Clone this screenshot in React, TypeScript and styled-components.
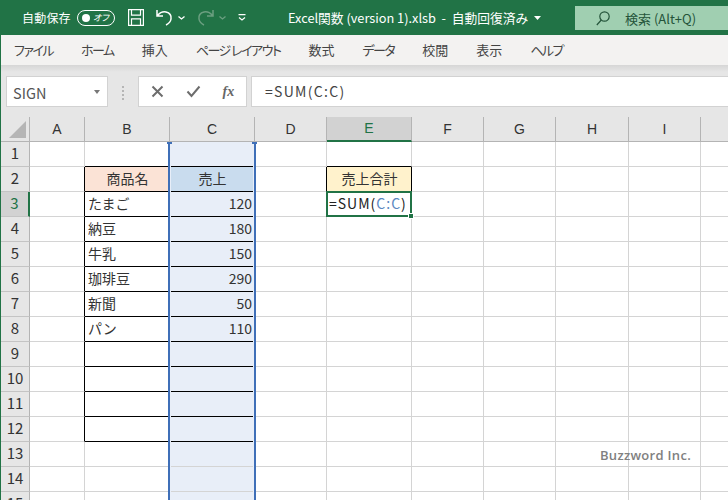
import React from "react";
import styled, { createGlobalStyle } from "styled-components";

const GlobalStyle = createGlobalStyle`
  html, body {
    margin: 0;
    padding: 0;
    background: #fff;
  }
  body {
    font-family: "Noto Sans CJK JP", "Noto Sans", sans-serif;
  }
`;

const Page = styled.div`
  position: relative;
  width: 727px;
  height: 500px;
  overflow: hidden;
  border-left: 1px solid #217346;
  display: flex;
  flex-direction: column;
`;

const TitleBar = styled.header`
  height: 35px;
  flex: none;
  background: #217346;
  color: #fff;
  display: flex;
  align-items: center;
  font-size: 12px;
  font-feature-settings: "palt";
  padding-left: 21px;
`;

const AutoSave = styled.span`
  width: 55px;
  letter-spacing: 0.2px;
`;

const Toggle = styled.span`
  box-sizing: border-box;
  width: 38px;
  height: 16px;
  border: 1px solid #fff;
  border-radius: 8px;
  display: flex;
  align-items: center;
  padding-left: 4px;
  gap: 3px;
  font-size: 9px;
  font-style: italic;
  line-height: 1;
`;

const Knob = styled.i`
  width: 8px;
  height: 8px;
  border-radius: 50%;
  background: #fff;
`;

const BarIcon = styled.svg<{ $gap: number; $dim?: boolean }>`
  flex: none;
  margin-left: ${(p) => p.$gap}px;
  fill: none;
  stroke: ${(p) => (p.$dim ? "#6b9f80" : "#fff")};
`;

const DocTitle = styled.span`
  margin-left: 42px;
  width: 246px;
  white-space: pre;
  font-size: 12.750px;
`;

const SearchBox = styled.div`
  margin-left: 34px;
  flex: 1;
  height: 24px;
  align-self: flex-start;
  margin-top: 6px;
  background: #a0cfb1;
  color: #24543a;
  display: flex;
  align-items: center;
  padding-left: 21px;
  gap: 15px;
  font-size: 13px;
`;

const Menu = styled.nav`
  height: 30px;
  flex: none;
  background: #f3f2f1;
  display: flex;
  align-items: center;
  gap: 28px;
  padding-left: 13px;
  padding-bottom: 1px;
  box-sizing: border-box;
  color: #444;
  font-size: 13px;
  font-feature-settings: "palt";
`;

const MenuItem = styled.span<{ $kana: boolean }>`
  letter-spacing: ${(p) => (p.$kana ? "-1.500px" : "0")};
`;

const FormulaArea = styled.div`
  height: 52px;
  flex: none;
  box-sizing: border-box;
  padding: 11px 0 0 5px;
  background: linear-gradient(#d6d6d6, #e6e6e6 7px);
  display: flex;
  align-items: flex-start;
`;

const Field = styled.div`
  box-sizing: border-box;
  height: 31px;
  background: #fff;
  border: 1px solid #d2d2d2;
  display: flex;
  align-items: center;
  color: #555;
`;

const NameBox = styled(Field)`
  width: 102px;
  padding: 1px 7px 0 6px;
  justify-content: space-between;
  font-size: 14.500px;
`;

const Arrow = styled.i`
  width: 0;
  height: 0;
  border-left: 3.500px solid transparent;
  border-right: 3.500px solid transparent;
  border-top: 4px solid #777;
`;

const Grip = styled.span`
  width: 30px;
  display: flex;
  flex-direction: column;
  align-items: center;
  gap: 2px;
  padding-top: 10px;

  i {
    width: 2px;
    height: 2px;
    background: #b5b5b5;
  }
`;

const ButtonBox = styled(Field)`
  width: 109px;
  margin-right: 4px;
  padding-left: 11.500px;
  gap: 22px;
`;

const ButtonIcon = styled.svg`
  fill: none;
  stroke: #6d6d6d;
  stroke-width: 2;
  flex: none;
`;

const FxLabel = styled.span`
  font-family: "Liberation Serif", serif;
  font-style: italic;
  font-weight: 700;
  font-size: 14px;
  color: #666;
`;

const FormulaInput = styled(Field)`
  flex: 1;
  padding: 0 0 1px 13px;
  border-right: none;
  font-size: 14px;
  letter-spacing: 1.300px;
  color: #444;
`;

const Sheet = styled.div`
  flex: 1;
  display: grid;
  grid-template-columns: 29px 55px 85px 85px 72px 85px 72px 72px 73px 72px 28px;
  grid-auto-rows: 25px;
  grid-template-rows: 25px;
  overflow: hidden;
  color: #333;
  font-size: 14px;
`;

const Corner = styled.div`
  background: #e6e6e6;
  border-right: 1px solid #b4b4b4;
  border-bottom: 1px solid #b4b4b4;
  box-sizing: border-box;
  display: flex;
  align-items: flex-end;
  justify-content: flex-end;
  padding: 0 3px 3px 0;
`;

const CornerMark = styled.i`
  width: 0;
  height: 0;
  border-left: 17px solid transparent;
  border-bottom: 17px solid #b5b5b5;
`;

const ColHead = styled.div<{ $active?: boolean }>`
  box-sizing: border-box;
  display: flex;
  align-items: center;
  justify-content: center;
  padding-bottom: 1px;
  font-family: "Liberation Sans", sans-serif;
  background: ${(p) => (p.$active ? "#d2d2d2" : "#e6e6e6")};
  color: ${(p) => (p.$active ? "#217346" : "#333")};
  border-right: 1px solid #b4b4b4;
  border-bottom: ${(p) => (p.$active ? "2px solid #217346" : "1px solid #b4b4b4")};
`;

const RowHead = styled.div<{ $row: number; $active?: boolean }>`
  grid-column: 1;
  grid-row: ${(p) => p.$row + 1};
  box-sizing: border-box;
  display: flex;
  align-items: center;
  justify-content: center;
  padding-bottom: 3px;
  font-size: 15px;
  background: ${(p) => (p.$active ? "#d2d2d2" : "#e6e6e6")};
  color: ${(p) => (p.$active ? "#217346" : "#333")};
  border-right: ${(p) => (p.$active ? "2px solid #217346" : "1px solid #b4b4b4")};
  border-bottom: 1px solid #c4c4c4;
`;

const Cell = styled.div<{
  $col: number;
  $row: number;
  $bg?: string;
  $right?: boolean;
  $bottom?: boolean;
  $align?: string;
}>`
  grid-column: ${(p) => p.$col + 2};
  grid-row: ${(p) => p.$row + 1};
  box-sizing: border-box;
  display: flex;
  align-items: center;
  justify-content: ${(p) => p.$align ?? "flex-start"};
  padding: 0 2px 2px 3px;
  white-space: nowrap;
  background: ${(p) => p.$bg ?? "#fff"};
  border-right: 1px solid ${(p) => (p.$right ? "#000" : "#d4d4d4")};
  border-bottom: 1px solid ${(p) => (p.$bottom ? "#000" : "#d4d4d4")};
`;

const RangeMark = styled.div`
  grid-column: 4;
  grid-row: 2 / span 15;
  z-index: 1;
  margin: 0 -1px 0 -2px;
  border-left: 2px solid #3f6fb8;
  border-right: 2px solid #3f6fb8;
  box-shadow: inset 1px 0 0 #e8eef8, inset -1px 0 0 #e8eef8;
  position: relative;

  &::before,
  &::after {
    content: "";
    position: absolute;
    top: 0;
    width: 5px;
    height: 2px;
    background: #3f6fb8;
  }
  &::before {
    left: -3px;
  }
  &::after {
    right: -3px;
  }
`;

const EditCell = styled.div`
  grid-column: 6;
  grid-row: 4;
  z-index: 2;
  position: relative;
  margin: -1px 0 0 -1px;
  background: #fff;
  border: 2px solid #217346;
  display: flex;
  align-items: center;
  padding: 0 0 2px 1px;
  white-space: nowrap;
  letter-spacing: 1px;
  color: #222;

  &::after {
    content: "";
    position: absolute;
    right: -4px;
    bottom: -4px;
    width: 4px;
    height: 4px;
    background: #217346;
    border: 1px solid #fff;
  }
`;

const RefText = styled.span`
  color: #5b87c0;
`;

const Watermark = styled.div`
  position: absolute;
  left: 599px;
  top: 446px;
  font-family: "Open Sans", sans-serif;
  font-weight: 600;
  font-size: 13px;
  letter-spacing: 0.300px;
  color: #808080;
`;

const COLS = ["A", "B", "C", "D", "E", "F", "G", "H", "I", "J"];
const ROWS = 15;

const SHEET: Record<string, { text: string; bg?: string; align?: string }> = {
  B2: { text: "商品名", bg: "#fbe3d6", align: "center" },
  C2: { text: "売上", bg: "#c9dcee", align: "center" },
  E2: { text: "売上合計", bg: "#fff2cc", align: "center" },
  B3: { text: "たまご" },
  C3: { text: "120", align: "flex-end" },
  B4: { text: "納豆" },
  C4: { text: "180", align: "flex-end" },
  B5: { text: "牛乳" },
  C5: { text: "150", align: "flex-end" },
  B6: { text: "珈琲豆" },
  C6: { text: "290", align: "flex-end" },
  B7: { text: "新聞" },
  C7: { text: "50", align: "flex-end" },
  B8: { text: "パン" },
  C8: { text: "110", align: "flex-end" },
};

const MENU = ["ファイル", "ホーム", "挿入", "ページ レイアウト", "数式", "データ", "校閲", "表示", "ヘルプ"];

const isTable = (col: string, row: number) => (col === "B" || col === "C") && row >= 2 && row <= 12;

const renderCell = (col: string, index: number, row: number) => {
  const key = `${col}${row}`;
  const data = SHEET[key];
  const boxed = isTable(col, row) || (col === "E" && row === 2);
  const bg = data?.bg ?? (col === "C" ? "#e8eef8" : undefined);
  const right =
    (col === "A" && row >= 2 && row <= 12) ||
    isTable(col, row) ||
    (col === "D" && row === 2) ||
    (col === "E" && row === 2);
  const bottom =
    boxed || ((col === "B" || col === "C") && row === 1) || (col === "E" && row === 1);
  return (
    <Cell
      key={key}
      $col={index}
      $row={row}
      $bg={bg}
      $right={right}
      $bottom={bottom}
      $align={data?.align}
    >
      {data?.text}
    </Cell>
  );
};

const App: React.FC = () => {
  return (
    <Page>
      <GlobalStyle />
      <TitleBar>
        <AutoSave>自動保存</AutoSave>
        <Toggle>
          <Knob />
          オフ
        </Toggle>
        <BarIcon $gap={13} width="16" height="17" viewBox="0 0 16 17" strokeWidth="1.2">
          <path d="M.6.6h14.8v15.800H.6zM3.500.6v5.600h9V.6M3.500 16.400v-6.600h9v6.600" />
        </BarIcon>
        <BarIcon $gap={12} width="17" height="17" viewBox="0 0 17 17" strokeWidth="1.5">
          <path d="M1 1v6h6M1.500 6.500C4 3.500 7 2.500 10 3c3.500.8 5.500 3.600 5 7-.4 2.600-2.500 4.800-5 6" />
        </BarIcon>
        <BarIcon $gap={5} width="7" height="4" viewBox="0 0 7 4" strokeWidth="1.3">
          <path d="M.5.5l3 2.500 3-2.500" />
        </BarIcon>
        <BarIcon $gap={12} $dim width="17" height="17" viewBox="0 0 17 17" strokeWidth="1.5">
          <path d="M16 1v6h-6M15.500 6.500C13 3.500 10 2.500 7 3 3.500 3.800 1.500 6.600 2 10c.4 2.600 2.500 4.800 5 6" />
        </BarIcon>
        <BarIcon $gap={5} $dim width="7" height="4" viewBox="0 0 7 4" strokeWidth="1.3">
          <path d="M.5.5l3 2.500 3-2.500" />
        </BarIcon>
        <BarIcon $gap={12} width="8" height="7" viewBox="0 0 8 7" strokeWidth="1.2">
          <path d="M.5.7h7M1 3.500l3 2.500 3-2.500" />
        </BarIcon>
        <DocTitle>{"Excel関数 (version 1).xlsb  -  自動回復済み"}</DocTitle>
        <BarIcon $gap={0} width="7" height="4" viewBox="0 0 7 4" strokeWidth="0">
          <path d="M0 0h7L3.500 4z" fill="#fff" />
        </BarIcon>
        <SearchBox>
          <svg width="14" height="15" viewBox="0 0 14 15" fill="none" stroke="#24543a" strokeWidth="1.2">
            <circle cx="8.500" cy="5.500" r="4.700" />
            <path d="M5.300 9L.8 14" />
          </svg>
          検索 (Alt+Q)
        </SearchBox>
      </TitleBar>
      <Menu>
        {MENU.map((m) => (
          <MenuItem key={m} $kana={/[ァ-ヶー]/.test(m)}>
            {m}
          </MenuItem>
        ))}
      </Menu>
      <FormulaArea>
        <NameBox>
          SIGN
          <Arrow />
        </NameBox>
        <Grip>
          <i />
          <i />
          <i />
          <i />
        </Grip>
        <ButtonBox>
          <ButtonIcon width="13" height="13" viewBox="0 0 13 13">
            <path d="M1.500 1.500l10 10M11.500 1.500l-10 10" />
          </ButtonIcon>
          <ButtonIcon width="15" height="13" viewBox="0 0 15 13" strokeWidth="2.600">
            <path d="M1.500 6.500l4 4.500 8-9.500" />
          </ButtonIcon>
          <FxLabel>fx</FxLabel>
        </ButtonBox>
        <FormulaInput>=SUM(C:C)</FormulaInput>
      </FormulaArea>
      <Sheet>
        <Corner>
          <CornerMark />
        </Corner>
        {COLS.map((c) => (
          <ColHead key={c} $active={c === "E"}>
            {c !== "J" ? c : ""}
          </ColHead>
        ))}
        {Array.from({ length: ROWS }, (_, i) => i + 1).map((row) => (
          <React.Fragment key={row}>
            <RowHead $row={row} $active={row === 3}>
              {row}
            </RowHead>
            {COLS.map((c, i) => renderCell(c, i, row))}
          </React.Fragment>
        ))}
        <RangeMark />
        <EditCell>
          =SUM(<RefText>C:C</RefText>)
        </EditCell>
      </Sheet>
      <Watermark>Buzzword Inc.</Watermark>
    </Page>
  );
};

export default App;
